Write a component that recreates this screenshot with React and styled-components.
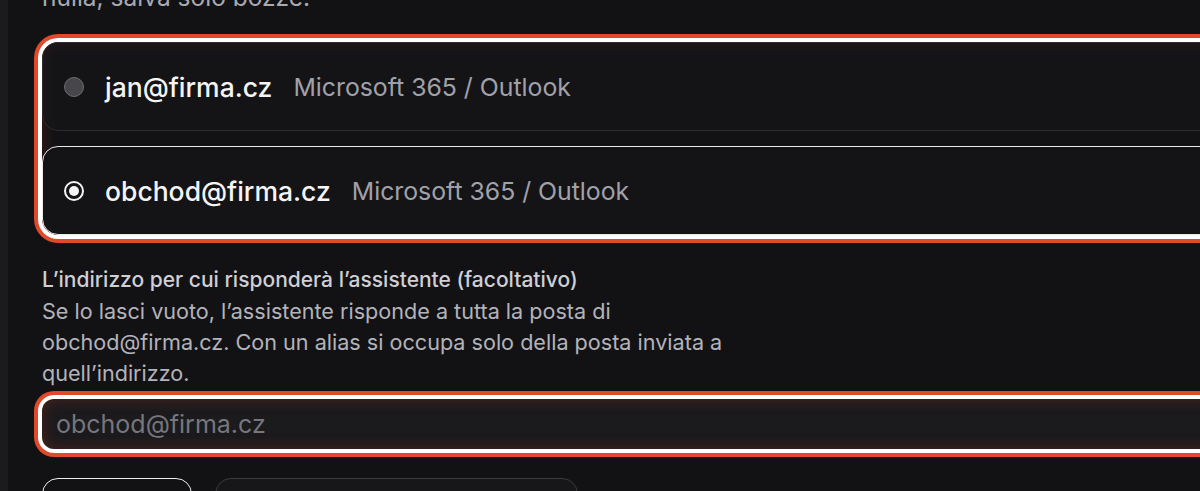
import React, { useState } from 'react';
import styled, { createGlobalStyle, css } from 'styled-components';

const GlobalStyle = createGlobalStyle`
  html, body {
    margin: 0;
    padding: 0;
    background: #121215;
    font-family: 'Inter', 'Noto Sans', sans-serif;
    overflow: hidden;
  }
`;

const focusRing = css`
  box-shadow:
    0 0 0 4px #ffffff,
    0 0 0 8px #e0492b,
    inset 0 0 16px rgba(196, 64, 40, 0.28);
`;

const Page = styled.div`
  display: flex;
  height: 491px;
  overflow: hidden;
`;

const SideEdge = styled.div`
  width: 8px;
  flex-shrink: 0;
  background: #1b1b1e;
`;

const Main = styled.div`
  flex: 1;
  padding: 0 0 0 34px;
  display: flex;
  flex-direction: column;
  min-width: 0;
`;

const Intro = styled.p`
  margin: -18px 0 0;
  font-size: 24.5px;
  line-height: 30px;
  color: #a9a9b0;
`;

const Group = styled.div`
  margin: 30px -40px 0 0;
  border-radius: 16px;
  display: flex;
  flex-direction: column;
  gap: 15px;
  ${focusRing}
`;

const Option = styled.label`
  display: flex;
  align-items: center;
  gap: 21px;
  height: 89px;
  padding: 0 21px;
  box-sizing: border-box;
  border-radius: 16px;
  border: 1.5px solid ${p => (p.$selected ? '#e9e9ec' : '#2c2c31')};
  background: ${p => (p.$selected ? '#141417' : 'rgba(22, 22, 25, 0.6)')};
  cursor: pointer;
`;

const Radio = styled.span`
  width: 20px;
  height: 20px;
  border-radius: 50%;
  box-sizing: border-box;
  flex-shrink: 0;
  display: flex;
  align-items: center;
  justify-content: center;
  ${p =>
    p.$checked
      ? css`
          border: 2px solid #f4f4f5;
          background: #141417;
          &::after {
            content: '';
            width: 10px;
            height: 10px;
            border-radius: 50%;
            background: #f4f4f5;
          }
        `
      : css`
          border: 1.5px solid #6d6d73;
          background: #46464b;
        `}
`;

const Address = styled.span`
  font-size: 26.5px;
  font-weight: 500;
  color: #f4f4f5;
`;

const Provider = styled.span`
  font-size: 24.8px;
  color: #a1a1aa;
`;

const Field = styled.div`
  margin-top: 29px;
  display: flex;
  flex-direction: column;
`;

const Label = styled.div`
  font-size: 21px;
  font-weight: 500;
  line-height: 31px;
  color: #cfcfd5;
`;

const Hint = styled.div`
  margin-top: 1px;
  max-width: 700px;
  font-size: 21.6px;
  line-height: 31px;
  color: #b3b3ba;
`;

const Input = styled.input`
  margin: 10px -40px 0 0;
  height: 50px;
  box-sizing: border-box;
  padding: 0 14px;
  border: none;
  border-radius: 12px;
  background: #1b1a1d;
  font-family: inherit;
  font-size: 25px;
  color: #f4f4f5;
  outline: none;
  ${focusRing}

  &::placeholder {
    color: #76767d;
  }
`;

const Actions = styled.div`
  margin-top: 29px;
  display: flex;
  gap: 23px;
`;

const Button = styled.button`
  flex-shrink: 0;
  height: 64px;
  width: ${p => p.$width}px;
  border-radius: 16px;
  border: 1.5px solid ${p => (p.$primary ? '#ededf0' : '#3a3a40')};
  background: ${p => (p.$primary ? '#121215' : '#17171a')};
  color: #f4f4f5;
  font-family: inherit;
  font-size: 20px;
`;

const accounts = [
  { id: 'jan', email: 'jan@firma.cz', provider: 'Microsoft 365 / Outlook' },
  { id: 'obchod', email: 'obchod@firma.cz', provider: 'Microsoft 365 / Outlook' },
];

export default function App() {
  const [selected, setSelected] = useState('obchod');

  return (
    <>
      <GlobalStyle />
      <Page>
        <SideEdge />
        <Main>
          <Intro>nulla, salva solo bozze.</Intro>
          <Group role="radiogroup">
            {accounts.map(a => (
              <Option
                key={a.id}
                $selected={selected === a.id}
                onClick={() => setSelected(a.id)}
              >
                <Radio $checked={selected === a.id} />
                <Address>{a.email}</Address>
                <Provider>{a.provider}</Provider>
              </Option>
            ))}
          </Group>
          <Field>
            <Label>L’indirizzo per cui risponderà l’assistente (facoltativo)</Label>
            <Hint>
              Se lo lasci vuoto, l’assistente risponde a tutta la posta di
              obchod@firma.cz. Con un alias si occupa solo della posta inviata a
              quell’indirizzo.
            </Hint>
            <Input placeholder="obchod@firma.cz" />
          </Field>
          <Actions>
            <Button $primary $width={150}>Salva</Button>
            <Button $width={363}>Annulla</Button>
          </Actions>
        </Main>
      </Page>
    </>
  );
}
